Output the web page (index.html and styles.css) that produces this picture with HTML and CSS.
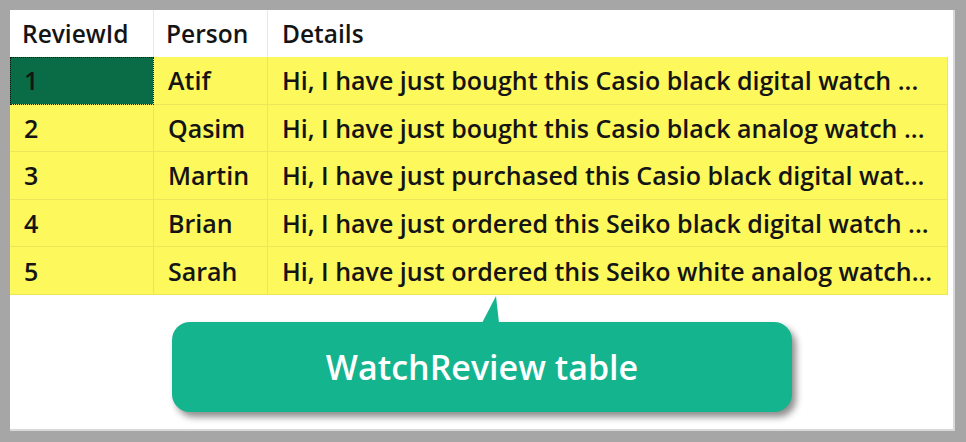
FILE: index.html
```html
<!DOCTYPE html>
<html>
<head>
<meta charset="utf-8">
<link rel="stylesheet" href="styles.css">
</head>
<body>
<div class="panel">
  <div class="grid">
    <div class="hcell">ReviewId</div>
    <div class="hcell">Person</div>
    <div class="hcell last">Details</div>

    <div class="cell sel">1</div>
    <div class="cell">Atif</div>
    <div class="cell">Hi, I have just bought this Casio black digital watch ...</div>

    <div class="cell">2</div>
    <div class="cell">Qasim</div>
    <div class="cell">Hi, I have just bought this Casio black analog watch ...</div>

    <div class="cell">3</div>
    <div class="cell">Martin</div>
    <div class="cell">Hi, I have just purchased this Casio black digital wat...</div>

    <div class="cell">4</div>
    <div class="cell">Brian</div>
    <div class="cell">Hi, I have just ordered this Seiko black digital watch ...</div>

    <div class="cell">5</div>
    <div class="cell">Sarah</div>
    <div class="cell">Hi, I have just ordered this Seiko white analog watch...</div>
  </div>
  <div class="callout-wrap">
    <div class="callout">WatchReview table</div>
  </div>
</div>
</body>
</html>
```

FILE: styles.css
```css
html, body {
  margin: 0;
  padding: 0;
}
body {
  width: 966px;
  height: 442px;
  background: #a6a6a6;
  padding: 10px 11px 11px 10px;
  box-sizing: border-box;
  font-family: "Open Sans", "Noto Sans", sans-serif;
}
.panel {
  width: 945px;
  height: 421px;
  background: #ffffff;
  border-right: 2px solid #d9d9d9;
  border-bottom: 2px solid #d9d9d9;
  box-sizing: border-box;
}
.grid {
  display: grid;
  grid-template-columns: 144px 114px 680px;
  grid-template-rows: 47px repeat(5, 47.6px);
}
.hcell {
  display: flex;
  align-items: center;
  padding-left: 12px;
  font-size: 24.5px;
  font-weight: 600;
  color: #141414;
  border-right: 1px solid #e8e8e8;
  white-space: nowrap;
}
.hcell.last {
  border-right: none;
  padding-left: 14px;
}
.cell {
  display: flex;
  align-items: center;
  padding-left: 14px;
  font-size: 25px;
  font-weight: 600;
  color: #141414;
  background: #fdf85c;
  border-right: 1px solid #eee658;
  border-bottom: 1px solid #eee658;
  white-space: nowrap;
  overflow: hidden;
}
.cell.sel {
  background: #0a6c46;
  outline: 1px dotted #111;
  outline-offset: -1px;
}
.callout-wrap {
  padding: 27px 0 0 162px;
}
.callout {
  position: relative;
  width: 620px;
  height: 90px;
  background: #14b48f;
  border-radius: 18px;
  box-shadow: 4px 5px 7px rgba(0, 0, 0, 0.45);
  color: #ffffff;
  font-size: 34px;
  font-weight: 600;
  display: flex;
  align-items: center;
  justify-content: center;
}
.callout::before {
  content: "";
  position: absolute;
  left: 310px;
  top: -26px;
  width: 0;
  height: 0;
  border-left: 14px solid transparent;
  border-right: 3px solid transparent;
  border-bottom: 27px solid #14b48f;
}
```
